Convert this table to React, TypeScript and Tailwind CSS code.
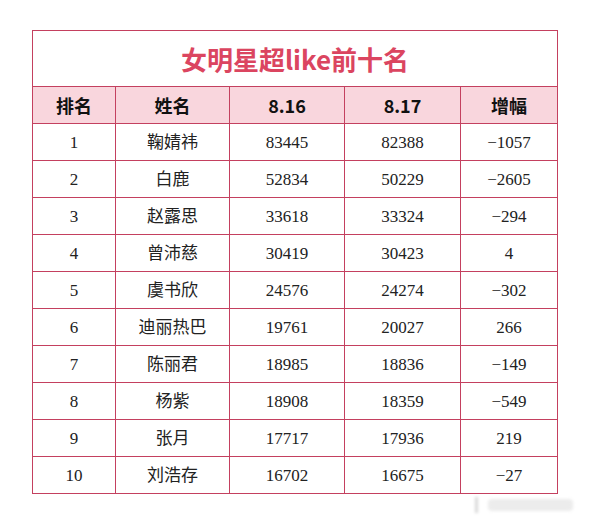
const rows = [
  ["1", "鞠婧祎", "83445", "82388", "-1057"],
  ["2", "白鹿", "52834", "50229", "-2605"],
  ["3", "赵露思", "33618", "33324", "-294"],
  ["4", "曾沛慈", "30419", "30423", "4"],
  ["5", "虞书欣", "24576", "24274", "-302"],
  ["6", "迪丽热巴", "19761", "20027", "266"],
  ["7", "陈丽君", "18985", "18836", "-149"],
  ["8", "杨紫", "18908", "18359", "-549"],
  ["9", "张月", "17717", "17936", "219"],
  ["10", "刘浩存", "16702", "16675", "-27"],
]

const headers = ["排名", "姓名", "8.16", "8.17", "增幅"]

export default function App() {
  return (
    <div className="w-[589px] h-[524px] bg-white relative overflow-hidden">
      <div className="pt-[30px] pl-[32px]">
        <table className="border-collapse table-fixed w-[525px]">
          <colgroup>
            <col className="w-[83px]" />
            <col className="w-[114px]" />
            <col className="w-[115px]" />
            <col className="w-[116px]" />
            <col className="w-[97px]" />
          </colgroup>
          <thead>
            <tr className="h-[56px]">
              <th
                colSpan={5}
                className="border border-[#c4405f] text-center text-[26px] font-bold text-[#db4560] font-['Noto_Sans_CJK_SC',sans-serif] leading-none"
              >
                女明星超like前十名
              </th>
            </tr>
            <tr className="h-[37px] bg-[#f9d6dd]">
              {headers.map((h) => (
                <th
                  key={h}
                  className="border border-[#c4405f] text-center text-[18px] font-bold text-[#111] font-['Noto_Sans_CJK_SC',sans-serif] leading-none"
                >
                  {h}
                </th>
              ))}
            </tr>
          </thead>
          <tbody>
            {rows.map((r) => (
              <tr key={r[0]} className="h-[37px]">
                {r.map((c, i) => (
                  <td
                    key={i}
                    className="border border-[#c4405f] text-center text-[17px] text-[#222] font-['Liberation_Serif','Noto_Sans_CJK_SC',serif] leading-none"
                  >
                    {c.startsWith("-") ? "−" + c.slice(1) : c}
                  </td>
                ))}
              </tr>
            ))}
          </tbody>
        </table>
      </div>
      <div className="absolute left-[475px] top-[497px] flex items-center gap-[10px] blur-[1.5px]">
        <div className="w-[3px] h-[16px] bg-[#d8d8d8]" />
        <div className="w-[85px] h-[12px] bg-[#ececec] rounded-sm" />
      </div>
    </div>
  )
}
